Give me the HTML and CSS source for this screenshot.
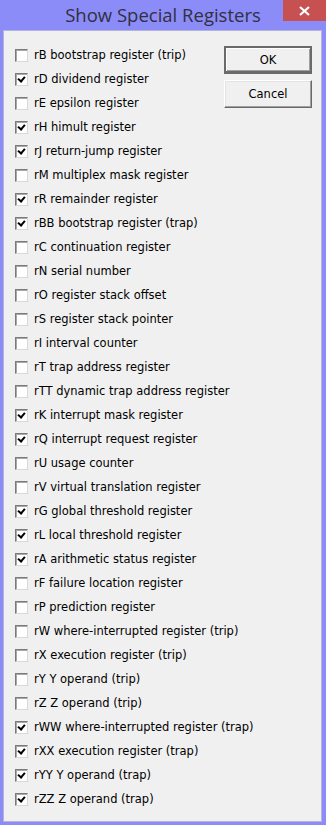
FILE: index.html
```html
<!DOCTYPE html>
<html lang="en">
<head>
  <meta charset="UTF-8" />
  <title>Show Special Registers</title>
  <link rel="stylesheet" href="styles.css">
</head>
<body>
  <div class="window">
    <div class="title-bar">
      <span class="title">Show Special Registers</span>
      <button class="close-btn">
        <svg width="11" height="10" viewBox="0 0 11 10"><path d="M1 1 L10 9 M10 1 L1 9" stroke="#fff" stroke-width="2.2" /></svg>
      </button>
    </div>
    <div class="client">
      <ul class="reg-list">
        <li><span class="box"></span>rB bootstrap register (trip)</li>
        <li><span class="box checked"></span>rD dividend register</li>
        <li><span class="box"></span>rE epsilon register</li>
        <li><span class="box checked"></span>rH himult register</li>
        <li><span class="box checked"></span>rJ return-jump register</li>
        <li><span class="box"></span>rM multiplex mask register</li>
        <li><span class="box checked"></span>rR remainder register</li>
        <li><span class="box checked"></span>rBB bootstrap register (trap)</li>
        <li><span class="box"></span>rC continuation register</li>
        <li><span class="box"></span>rN serial number</li>
        <li><span class="box"></span>rO register stack offset</li>
        <li><span class="box"></span>rS register stack pointer</li>
        <li><span class="box"></span>rI interval counter</li>
        <li><span class="box"></span>rT trap address register</li>
        <li><span class="box"></span>rTT dynamic trap address register</li>
        <li><span class="box checked"></span>rK interrupt mask register</li>
        <li><span class="box checked"></span>rQ interrupt request register</li>
        <li><span class="box"></span>rU usage counter</li>
        <li><span class="box"></span>rV virtual translation register</li>
        <li><span class="box checked"></span>rG global threshold register</li>
        <li><span class="box checked"></span>rL local threshold register</li>
        <li><span class="box checked"></span>rA arithmetic status register</li>
        <li><span class="box"></span>rF failure location register</li>
        <li><span class="box"></span>rP prediction register</li>
        <li><span class="box"></span>rW where-interrupted register (trip)</li>
        <li><span class="box"></span>rX execution register (trip)</li>
        <li><span class="box"></span>rY Y operand (trip)</li>
        <li><span class="box"></span>rZ Z operand (trip)</li>
        <li><span class="box checked"></span>rWW where-interrupted register (trap)</li>
        <li><span class="box checked"></span>rXX execution register (trap)</li>
        <li><span class="box checked"></span>rYY Y operand (trap)</li>
        <li><span class="box checked"></span>rZZ Z operand (trap)</li>
      </ul>
      <div class="buttons">
        <button class="btn default">OK</button>
        <button class="btn">Cancel</button>
      </div>
    </div>
  </div>
</body>
</html>
```

FILE: styles.css
```css
body {
  margin: 0;
  background: #8c8cf8;
  font-family: 'DejaVu Sans', sans-serif;
}
.window {
  height: 825px;
  display: flex;
  flex-direction: column;
  background: #8c8cf8;
}
.title-bar {
  height: 30px;
  position: relative;
  display: flex;
  justify-content: center;
  align-items: center;
}
.title {
  font-family: 'Open Sans', sans-serif;
  font-size: 18.5px;
  color: #303040;
  margin-top: -2px;
}
.close-btn {
  position: absolute;
  top: 0;
  right: 0;
  width: 43px;
  height: 21px;
  border: none;
  padding: 0;
  background: #c75050;
  display: flex;
  justify-content: center;
  align-items: center;
}
.client {
  flex: 1;
  margin: 0 4px 3px 3px;
  background: #f0f0f0;
  border: 1px solid #b4b4d8;
  display: flex;
}
.reg-list {
  flex: 1;
  min-width: 0;
  list-style: none;
  margin: 0;
  padding: 12px 0 0 11px;
}
.reg-list li {
  height: 24px;
  display: flex;
  align-items: center;
  white-space: nowrap;
  font-size: 11.5px;
  color: #000;
}
.box {
  flex: none;
  width: 11px;
  height: 11px;
  margin-right: 6px;
  background: #fff;
  border: 1px solid;
  border-color: #7a7a7a #d8d8d8 #d8d8d8 #7a7a7a;
  box-shadow: inset 1px 1px #a8a8a8;
  position: relative;
}
.box.checked::after {
  content: "";
  position: absolute;
  left: 3px;
  top: 1px;
  width: 3px;
  height: 5px;
  border: solid #000;
  border-width: 0 2px 2px 0;
  transform: rotate(40deg);
}
.buttons {
  flex: none;
  display: flex;
  flex-direction: column;
  gap: 6px;
  padding: 15px 9px 0 0;
}
.btn {
  width: 88px;
  height: 28px;
  padding: 0;
  background: #f0f0f0;
  font-family: 'DejaVu Sans', sans-serif;
  font-size: 11.5px;
  color: #000;
  border: 1px solid;
  border-color: #fff #696969 #696969 #fff;
  box-shadow: inset -1px -1px #a0a0a0, inset 1px 1px #e3e3e3;
}
.btn.default {
  border: 2px solid #6a6a6a;
  border-bottom-width: 3px;
  box-shadow: inset 1px 1px #fff, inset -1px -1px #a0a0a0;
}
```
